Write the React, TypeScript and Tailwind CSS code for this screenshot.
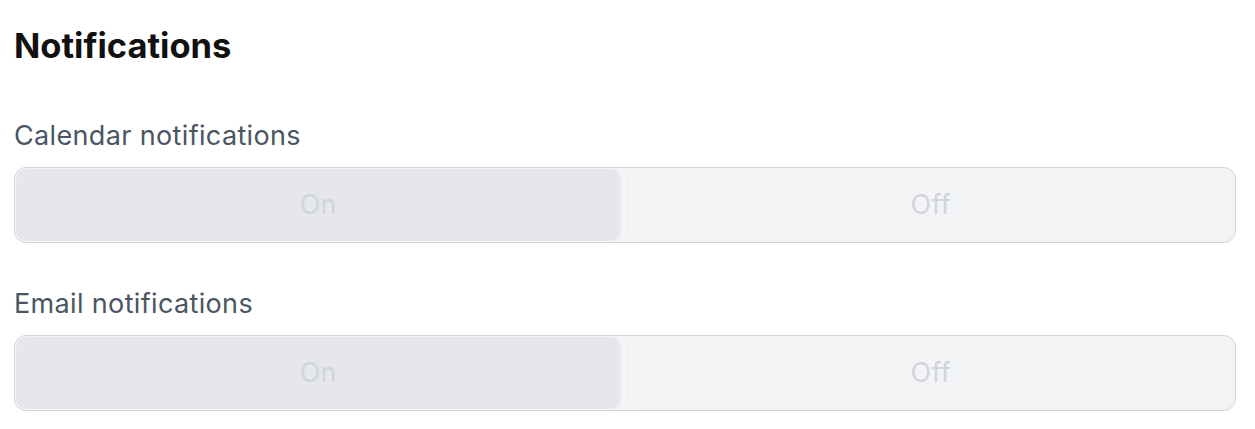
const sections = ["Calendar notifications", "Email notifications"];

function Segmented() {
  return (
    <div className="flex h-[76px] gap-[7px] rounded-[12px] border border-[#d1d5db] bg-[#f3f4f6] p-[1px]">
      <button
        disabled
        className="flex flex-1 items-center justify-center rounded-[11px] bg-[#e5e7eb] text-[27px] tracking-[0.3px] text-[#d1d5db]"
      >
        On
      </button>
      <button
        disabled
        className="flex flex-1 items-center justify-center rounded-[11px] border border-[#eceef1] bg-[#f3f4f6] text-[27px] tracking-[0.3px] text-[#d1d5db]"
      >
        Off
      </button>
    </div>
  );
}

export default function App() {
  return (
    <div
      className="min-h-screen bg-white pl-[14px] pr-[19px] pt-[25px]"
      style={{ fontFamily: "Inter, 'Noto Sans', sans-serif" }}
    >
      <h1 className="text-[34.5px] leading-[42px] font-bold text-[#111111]">Notifications</h1>
      <div className="mt-[53px] flex flex-col gap-[45px]">
        {sections.map((label) => (
          <div key={label} className="flex flex-col gap-[15px]">
            <div className="text-[27px] leading-[32px] tracking-[0.35px] text-[#4b5563]">{label}</div>
            <Segmented />
          </div>
        ))}
      </div>
    </div>
  );
}
